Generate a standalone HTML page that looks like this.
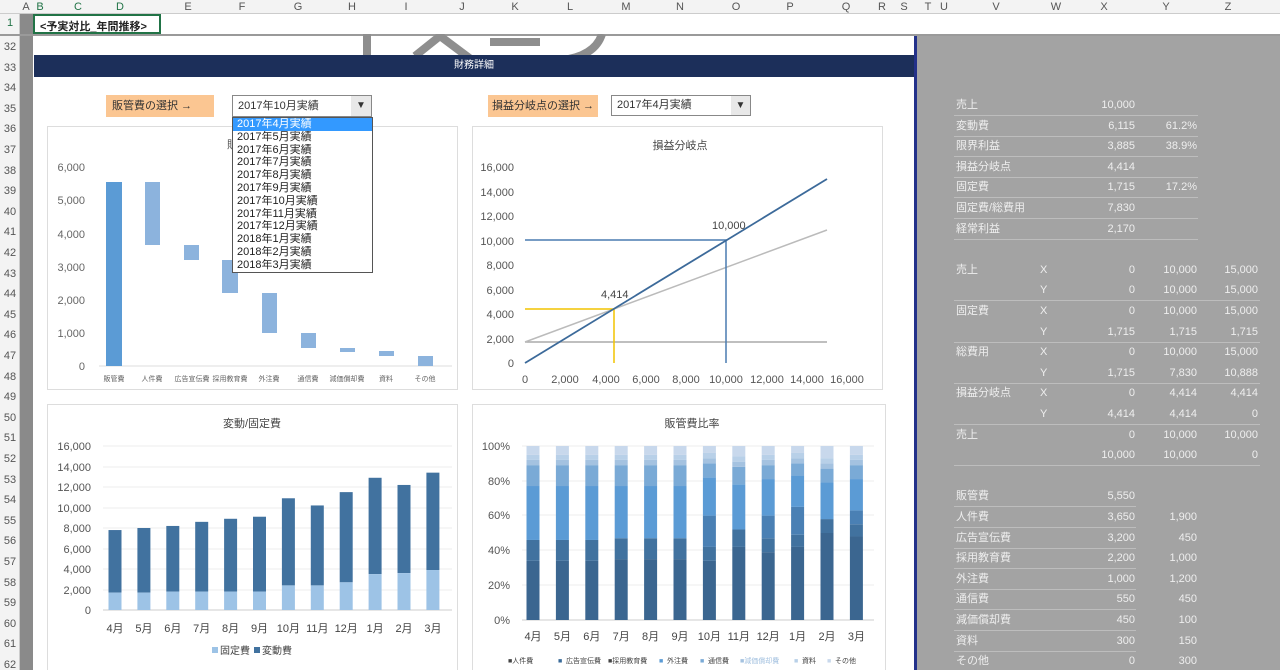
<!DOCTYPE html>
<html style="width:1280px;height:670px;overflow:hidden"><head><meta charset="utf-8"><style>
*{margin:0;padding:0;box-sizing:border-box}
body{width:1280px;height:670px;overflow:hidden;background:#a3a3a3;font-family:"Liberation Sans","Noto Sans CJK JP",sans-serif;position:relative;color:#333}
.a{position:absolute}
.ch{top:0;height:14px;font-size:11px;color:#555;text-align:center;line-height:14px}
.rh{left:0;width:20px;font-size:11px;color:#555;text-align:center}
.t{position:absolute;font-size:11px;color:#eee;line-height:14px}
.r{text-align:right}
.ln{position:absolute;height:1px;background:#bdbdbd}
.dd{font-size:11px;line-height:12.8px;height:12.8px;padding-left:4px;color:#222;overflow:hidden}
</style></head><body>
<div class="a" style="left:0;top:0;width:1280px;height:14px;background:#f3f3f3;border-bottom:1px solid #ccc"></div>
<div class="a ch" style="left:20px;width:12px">A</div>
<div class="a ch" style="left:34px;width:12px;color:#217346">B</div>
<div class="a ch" style="left:60px;width:36px;color:#217346">C</div>
<div class="a ch" style="left:100px;width:40px;color:#217346">D</div>
<div class="a ch" style="left:170px;width:36px">E</div><div class="a ch" style="left:224px;width:36px">F</div>
<div class="a ch" style="left:280px;width:36px">G</div><div class="a ch" style="left:334px;width:36px">H</div>
<div class="a ch" style="left:388px;width:36px">I</div><div class="a ch" style="left:444px;width:36px">J</div>
<div class="a ch" style="left:497px;width:36px">K</div><div class="a ch" style="left:552px;width:36px">L</div>
<div class="a ch" style="left:608px;width:36px">M</div><div class="a ch" style="left:662px;width:36px">N</div>
<div class="a ch" style="left:718px;width:36px">O</div><div class="a ch" style="left:772px;width:36px">P</div>
<div class="a ch" style="left:828px;width:36px">Q</div><div class="a ch" style="left:876px;width:12px">R</div>
<div class="a ch" style="left:898px;width:12px">S</div><div class="a ch" style="left:922px;width:12px">T</div>
<div class="a ch" style="left:938px;width:12px">U</div><div class="a ch" style="left:978px;width:36px">V</div>
<div class="a ch" style="left:1038px;width:36px">W</div><div class="a ch" style="left:1086px;width:36px">X</div>
<div class="a ch" style="left:1148px;width:36px">Y</div><div class="a ch" style="left:1210px;width:36px">Z</div>
<div class="a" style="left:0;top:14px;width:20px;height:656px;background:#f3f3f3;border-right:1px solid #ccc"></div>
<div class="a" style="left:20px;top:14px;width:13px;height:656px;background:#8a8a8a"></div>
<div class="a rh" style="top:17px;color:#217346">1</div>
<div class="a" style="left:0;top:34px;width:1280px;height:2px;background:#9a9a9a"></div>
<div id="rows"></div>
<div class="a" style="left:33px;top:14px;width:1247px;height:20px;background:#fff"></div>
<div class="a" style="left:33px;top:14px;width:128px;height:20px;border:2px solid #217346;font-size:11px;font-weight:bold;padding:2px 0 0 5px;color:#222">&lt;予実対比_年間推移&gt;</div>
<div class="a" style="left:33px;top:36px;width:883px;height:634px;background:#fff"></div>
<div class="a" style="left:914px;top:36px;width:3px;height:634px;background:#23318a"></div>
<svg class="a" style="left:340px;top:34px" width="300" height="32"><g stroke="#8e8e8e" stroke-width="8" fill="none"><line x1="27" y1="0" x2="27" y2="28"/><path d="M75 22 L100 2 L132 26"/><line x1="150" y1="8" x2="200" y2="8"/><path d="M262 0 Q255 22 222 26"/></g></svg>
<div class="a" style="left:34px;top:55px;width:880px;height:22px;background:#1c2f5a;color:#fff;font-size:10px;text-align:center;line-height:22px">財務詳細</div>
<div class="a" style="left:106px;top:95px;width:108px;height:22px;background:#fbc692;font-size:11px;line-height:22px;padding-left:6px">販管費の選択 →</div>
<div class="a" style="left:488px;top:95px;width:110px;height:22px;background:#fbc692;font-size:11px;line-height:22px;padding-left:4px">損益分岐点の選択 →</div>
<div class="a" style="left:232px;top:95px;width:140px;height:22px;border:1px solid #888;font-size:11px;line-height:20px;padding-left:5px;background:#fff">2017年10月実績</div>
<div class="a" style="left:351px;top:96px;width:20px;height:20px;background:#e8e8e8;font-size:10px;text-align:center;line-height:20px">▼</div>
<div class="a" style="left:611px;top:95px;width:140px;height:21px;border:1px solid #888;font-size:11px;line-height:19px;padding-left:5px;background:#fff">2017年4月実績</div>
<div class="a" style="left:731px;top:96px;width:19px;height:19px;background:#e8e8e8;font-size:10px;text-align:center;line-height:19px">▼</div>
<svg class="a" style="left:47px;top:126px" width="412" height="265" font-family="Liberation Sans,Noto Sans CJK JP,sans-serif">
<rect x="0.5" y="0.5" width="410" height="263" fill="#fff" stroke="#ddd"/>
<text x="180" y="22" font-size="11" fill="#555">販</text>
<line x1="52" y1="240" x2="405" y2="240" stroke="#ddd"/>
<g font-size="11" fill="#666" text-anchor="end"><text x="38" y="244">0</text><text x="38" y="211">1,000</text><text x="38" y="178">2,000</text><text x="38" y="145">3,000</text><text x="38" y="112">4,000</text><text x="38" y="78">5,000</text><text x="38" y="45">6,000</text></g>
<rect x="59" y="56" width="16" height="184" fill="#5b9bd5"/>
<g fill="#8cb3dd"><rect x="98" y="56" width="15" height="63"/><rect x="137" y="119" width="15" height="15"/><rect x="175" y="134" width="16" height="33"/><rect x="215" y="167" width="15" height="40"/><rect x="254" y="207" width="15" height="15"/><rect x="293" y="222" width="15" height="4"/><rect x="332" y="225" width="15" height="5"/><rect x="371" y="230" width="15" height="10"/></g>
<g font-size="7" fill="#666" text-anchor="middle"><text x="67" y="255">販管費</text><text x="105" y="255">人件費</text><text x="145" y="255">広告宣伝費</text><text x="183" y="255">採用教育費</text><text x="222" y="255">外注費</text><text x="261" y="255">通信費</text><text x="300" y="255">減価償却費</text><text x="339" y="255">資料</text><text x="378" y="255">その他</text></g>
</svg>
<div class="a" style="left:232px;top:117px;width:141px;height:156px;background:#fff;border:1px solid #555">
<div class="dd" style="background:#3399ff;color:#fff">2017年4月実績</div><div class="dd">2017年5月実績</div><div class="dd">2017年6月実績</div><div class="dd">2017年7月実績</div><div class="dd">2017年8月実績</div><div class="dd">2017年9月実績</div><div class="dd">2017年10月実績</div><div class="dd">2017年11月実績</div><div class="dd">2017年12月実績</div><div class="dd">2018年1月実績</div><div class="dd">2018年2月実績</div><div class="dd">2018年3月実績</div></div>
<svg class="a" style="left:472px;top:126px" width="412" height="265" font-family="Liberation Sans,Noto Sans CJK JP,sans-serif">
<rect x="0.5" y="0.5" width="410" height="263" fill="#fff" stroke="#ddd"/>
<text x="208" y="23" font-size="11" fill="#444" text-anchor="middle">損益分岐点</text>
<g font-size="11" fill="#555" text-anchor="end"><text x="42" y="241">0</text><text x="42" y="217">2,000</text><text x="42" y="192">4,000</text><text x="42" y="168">6,000</text><text x="42" y="143">8,000</text><text x="42" y="119">10,000</text><text x="42" y="94">12,000</text><text x="42" y="70">14,000</text><text x="42" y="45">16,000</text></g>
<g font-size="11" fill="#555" text-anchor="middle"><text x="53" y="257">0</text><text x="93" y="257">2,000</text><text x="134" y="257">4,000</text><text x="174" y="257">6,000</text><text x="214" y="257">8,000</text><text x="254" y="257">10,000</text><text x="295" y="257">12,000</text><text x="335" y="257">14,000</text><text x="375" y="257">16,000</text></g>
<line x1="53" y1="216" x2="355" y2="216" stroke="#aaa" stroke-width="1.5"/>
<line x1="53" y1="216" x2="355" y2="104" stroke="#bbb" stroke-width="1.5"/>
<polyline points="53,183 142,183 142,237" fill="none" stroke="#f2c400" stroke-width="1.5"/>
<polyline points="53,114 254,114 254,237" fill="none" stroke="#4a7cb0" stroke-width="1.5"/>
<line x1="53" y1="237" x2="355" y2="53" stroke="#3c6a9a" stroke-width="1.8"/>
<text x="240" y="103" font-size="11" fill="#444">10,000</text><text x="129" y="172" font-size="11" fill="#444">4,414</text>
</svg>
<svg class="a" style="left:47px;top:404px" width="412" height="266" font-family="Liberation Sans,Noto Sans CJK JP,sans-serif">
<rect x="0.5" y="0.5" width="410" height="268" fill="#fff" stroke="#ddd"/>
<text x="205" y="23" font-size="11" fill="#444" text-anchor="middle">変動/固定費</text>
<g stroke="#eee"><line x1="56" y1="186" x2="405" y2="186"/><line x1="56" y1="165" x2="405" y2="165"/><line x1="56" y1="145" x2="405" y2="145"/><line x1="56" y1="124" x2="405" y2="124"/><line x1="56" y1="104" x2="405" y2="104"/><line x1="56" y1="83" x2="405" y2="83"/><line x1="56" y1="63" x2="405" y2="63"/><line x1="56" y1="42" x2="405" y2="42"/></g>
<line x1="56" y1="206" x2="405" y2="206" stroke="#ccc"/>
<g font-size="11" fill="#555" text-anchor="end"><text x="44" y="210">0</text><text x="44" y="190">2,000</text><text x="44" y="169">4,000</text><text x="44" y="149">6,000</text><text x="44" y="128">8,000</text><text x="44" y="108">10,000</text><text x="44" y="87">12,000</text><text x="44" y="67">14,000</text><text x="44" y="46">16,000</text></g>
<g id="c3"></g>
<g font-size="11" fill="#444" text-anchor="middle" id="c3l"></g>
<rect x="165" y="243" width="6" height="6" fill="#9dc3e6"/><text x="173" y="250" font-size="10" fill="#444">固定費</text>
<rect x="207" y="243" width="6" height="6" fill="#41729f"/><text x="215" y="250" font-size="10" fill="#444">変動費</text>
</svg>
<svg class="a" style="left:472px;top:404px" width="415" height="266" font-family="Liberation Sans,Noto Sans CJK JP,sans-serif">
<rect x="0.5" y="0.5" width="413" height="268" fill="#fff" stroke="#ddd"/>
<text x="220" y="23" font-size="11" fill="#444" text-anchor="middle">販管費比率</text>
<g stroke="#eee"><line x1="50" y1="42" x2="402" y2="42"/><line x1="50" y1="77" x2="402" y2="77"/><line x1="50" y1="111" x2="402" y2="111"/><line x1="50" y1="146" x2="402" y2="146"/><line x1="50" y1="181" x2="402" y2="181"/></g>
<line x1="50" y1="216" x2="402" y2="216" stroke="#ccc"/>
<g font-size="11" fill="#555" text-anchor="end"><text x="38" y="220">0%</text><text x="38" y="185">20%</text><text x="38" y="150">40%</text><text x="38" y="115">60%</text><text x="38" y="81">80%</text><text x="38" y="46">100%</text></g>
<g id="c4"></g>
<g font-size="11" fill="#444" text-anchor="middle" id="c4l"></g>
<g font-size="7" fill="#444"><text x="36" y="259">■人件費</text><text x="86" y="259" fill="#3a6b9a">■</text><text x="94" y="259">広告宣伝費</text><text x="136" y="259">■採用教育費</text><text x="187" y="259" fill="#5b9bd5">■</text><text x="195" y="259">外注費</text><text x="228" y="259" fill="#7aaad6">■</text><text x="236" y="259">通信費</text><text x="268" y="259" fill="#a4c2e0">■減価償却費</text><text x="322" y="259" fill="#b8d0e8">■</text><text x="330" y="259">資料</text><text x="355" y="259" fill="#c8d8ec">■</text><text x="363" y="259">その他</text></g>
</svg>
<div id="tbl"></div>
<script>
var rows='';for(var i=32;i<=62;i++){var y=37+(i-32)*20.6;rows+='<div class="a rh" style="top:'+(y+4)+'px">'+i+'</div>';}
document.getElementById('rows').innerHTML=rows;
var ns='http://www.w3.org/2000/svg';
function R(g,x,y,w,h,c){var r=document.createElementNS(ns,'rect');r.setAttribute('x',x);r.setAttribute('y',y);r.setAttribute('width',w);r.setAttribute('height',h);r.setAttribute('fill',c);g.appendChild(r);}
function T(g,x,y,s){var t=document.createElementNS(ns,'text');t.setAttribute('x',x);t.setAttribute('y',y);t.textContent=s;g.appendChild(t);}
var M=['4月','5月','6月','7月','8月','9月','10月','11月','12月','1月','2月','3月'];
var tot=[7800,8000,8200,8600,8900,9100,10900,10200,11500,12900,12200,13400],fx=[1700,1700,1800,1800,1800,1800,2400,2400,2700,3500,3600,3900];
var g3=document.getElementById('c3'),l3=document.getElementById('c3l');
for(var i=0;i<12;i++){var cx=68+i*28.9,k=0.01025;R(g3,cx-6.5,206-tot[i]*k,13,(tot[i]-fx[i])*k,'#41729f');R(g3,cx-6.5,206-fx[i]*k,13,fx[i]*k,'#9dc3e6');T(l3,cx,228,M[i]);}
var g4=document.getElementById('c4'),l4=document.getElementById('c4l');
var cols=['#3b6690','#41729f','#4a80b4','#5b9bd5','#7aaad6','#a4c2e0','#b8d0e8','#c8d8ec'];
var base=[[34,12,0,31,12,3,3,5],[34,12,0,31,12,3,3,5],[34,12,0,31,12,3,3,5],[35,12,0,30,12,3,3,5],[35,12,0,30,12,3,3,5],[35,12,0,30,12,3,3,5],[34,8,18,22,8,3,3,4],[42,10,0,26,10,3,3,6],[39,8,13,21,8,3,3,5],[42,7,16,18,7,3,3,4],[50,8,0,21,8,3,3,7],[48,7,8,18,8,3,3,5]];
for(var i=0;i<12;i++){var cx=61+i*29.4,y=216;for(var j=0;j<8;j++){var h=base[i][j]*1.74;if(!h)continue;R(g4,cx-6.5,y-h,13,h,cols[j]);y-=h;}if(y>42)R(g4,cx-6.5,42,13,y-42,cols[7]);T(l4,cx,236,M[i]);}
var d=[['売上','','10,000','',''],['変動費','','6,115','61.2%',''],['限界利益','','3,885','38.9%',''],['損益分岐点','','4,414','',''],['固定費','','1,715','17.2%',''],['固定費/総費用','','7,830','',''],['経常利益','','2,170','',''],null,['売上','X','0','10,000','15,000'],['','Y','0','10,000','15,000'],['固定費','X','0','10,000','15,000'],['','Y','1,715','1,715','1,715'],['総費用','X','0','10,000','15,000'],['','Y','1,715','7,830','10,888'],['損益分岐点','X','0','4,414','4,414'],['','Y','4,414','4,414','0'],['売上','','0','10,000','10,000'],['','','10,000','10,000','0'],null,['販管費','','5,550','',''],['人件費','','3,650','1,900',''],['広告宣伝費','','3,200','450',''],['採用教育費','','2,200','1,000',''],['外注費','','1,000','1,200',''],['通信費','','550','450',''],['減価償却費','','450','100',''],['資料','','300','150',''],['その他','','0','300','']];
var h='';for(var i=0;i<d.length;i++){var r=d[i];if(!r)continue;var y=98+i*20.6;
h+='<div class="t" style="left:956px;top:'+y+'px">'+r[0]+'</div><div class="t" style="left:1040px;top:'+y+'px">'+r[1]+'</div><div class="t r" style="left:1070px;width:65px;top:'+y+'px">'+r[2]+'</div><div class="t r" style="left:1130px;width:67px;top:'+y+'px">'+r[3]+'</div><div class="t r" style="left:1190px;width:68px;top:'+y+'px">'+r[4]+'</div>';
var w=(i<7)?244:(i>=19?182:306);if(i<18&&(i<7||i%2==1))h+='<div class="ln" style="left:954px;top:'+(y+17)+'px;width:'+w+'px"></div>';if(i>=19)h+='<div class="ln" style="left:954px;top:'+(y+17)+'px;width:'+w+'px"></div>';}
document.getElementById('tbl').innerHTML=h;
</script>
</body></html>
